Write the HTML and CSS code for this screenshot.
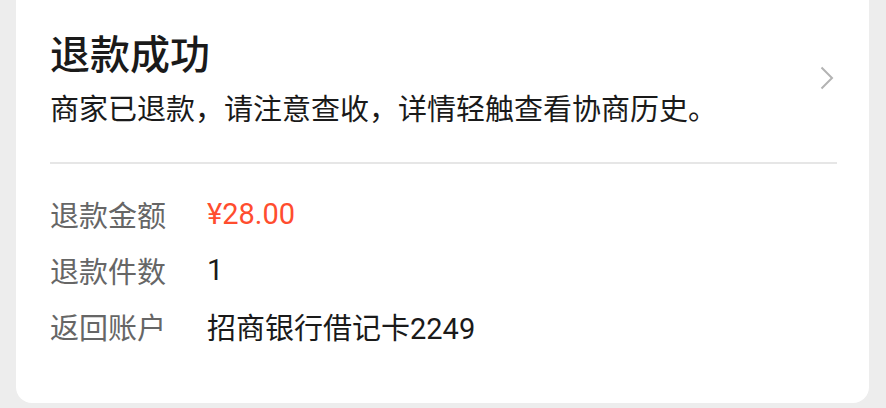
FILE: index.html
```html
<!DOCTYPE html>
<html lang="zh-CN">
<head>
<meta charset="utf-8">
<link rel="stylesheet" href="styles.css">
</head>
<body>
<div class="card">
  <div class="header">
    <div class="header-text">
      <div class="title">退款成功</div>
      <div class="subtitle">商家已退款，请注意查收，详情轻触查看协商历史。</div>
    </div>
    <svg class="chevron" width="14" height="24" viewBox="0 0 14 24"><path d="M1.5 1.5 L12 12 L1.5 22.5" fill="none" stroke="#b3b3b3" stroke-width="2"/></svg>
  </div>
  <div class="divider"></div>
  <div class="rows">
    <div class="row"><span class="label">退款金额</span><span class="value red">¥28.00</span></div>
    <div class="row"><span class="label">退款件数</span><span class="value">1</span></div>
    <div class="row"><span class="label">返回账户</span><span class="value">招商银行借记卡2249</span></div>
  </div>
</div>
</body>
</html>
```
FILE: styles.css
```css
html, body {
  margin: 0;
  padding: 0;
  background: #ededed;
  width: 886px;
  height: 408px;
  overflow: hidden;
  font-family: "Noto Sans CJK SC", "Noto Sans", sans-serif;
}
.card {
  margin-left: 16px;
  width: 853px;
  box-sizing: border-box;
  background: #fff;
  border-radius: 0 0 16px 16px;
  padding: 28px 32px 49px 34px;
}
.header {
  display: flex;
  align-items: center;
  justify-content: space-between;
}
.title {
  font-size: 40px;
  line-height: 48px;
  font-weight: 500;
  color: #1a1a1a;
}
.subtitle {
  margin-top: 11px;
  font-size: 29px;
  line-height: 40px;
  color: #1a1a1a;
}
.chevron {
  margin-right: 3px;
  display: block;
}
.divider {
  margin-top: 35px;
  height: 2px;
  background: #e6e6e6;
}
.rows {
  margin-top: 22px;
}
.row {
  display: flex;
  height: 56px;
  align-items: center;
  font-size: 29px;
}
.label {
  width: 157px;
  color: #666;
}
.value {
  color: #1a1a1a;
  font-family: Roboto, "Noto Sans CJK SC", sans-serif;
}
.value.red {
  color: #ff4d2e;
}
```
